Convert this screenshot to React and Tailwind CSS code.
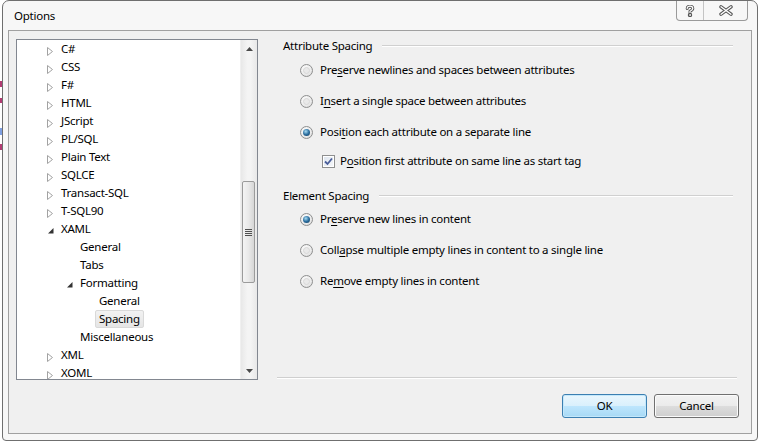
import React from "react";

const treeItems = [
  { t: "C#", l: 0, a: "closed" },
  { t: "CSS", l: 0, a: "closed" },
  { t: "F#", l: 0, a: "closed" },
  { t: "HTML", l: 0, a: "closed" },
  { t: "JScript", l: 0, a: "closed" },
  { t: "PL/SQL", l: 0, a: "closed" },
  { t: "Plain Text", l: 0, a: "closed" },
  { t: "SQLCE", l: 0, a: "closed" },
  { t: "Transact-SQL", l: 0, a: "closed" },
  { t: "T-SQL90", l: 0, a: "closed" },
  { t: "XAML", l: 0, a: "open" },
  { t: "General", l: 1 },
  { t: "Tabs", l: 1 },
  { t: "Formatting", l: 1, a: "open" },
  { t: "General", l: 2 },
  { t: "Spacing", l: 2, sel: true },
  { t: "Miscellaneous", l: 1 },
  { t: "XML", l: 0, a: "closed" },
  { t: "XOML", l: 0, a: "closed" },
];

const levelPad = ["pl-[26px]", "pl-[45px]", "pl-[64px]"];

function ClosedArrow() {
  return (
    <svg width="6" height="9" viewBox="0 0 6 9" className="mt-[4px] ml-[4px]">
      <polygon points="0.5,0.5 5.5,4.5 0.5,8.5" fill="#ffffff" stroke="#a2a2a2" strokeWidth="1" />
    </svg>
  );
}

function OpenArrow() {
  return (
    <svg width="6" height="6" viewBox="0 0 6 6" className="mt-[4px] ml-[5px]">
      <polygon points="5.5,0 5.5,5.5 0,5.5" fill="#333333" />
    </svg>
  );
}

function TreeRow({ item }) {
  return (
    <div className={`h-[18px] flex items-center shrink-0 ${levelPad[item.l]}`}>
      <div className="w-[14px] h-[18px] flex items-center">
        {item.a === "closed" && <ClosedArrow />}
        {item.a === "open" && <OpenArrow />}
      </div>
      <span
        className={
          item.sel
            ? "h-[18px] leading-[16px] px-[3px] border border-[#d9d9d9] rounded-[2px] bg-[linear-gradient(#f2f2f2,#e5e5e5)] whitespace-nowrap"
            : "h-[18px] leading-[16px] px-[3px] border border-transparent whitespace-nowrap"
        }
      >
        {item.t}
      </span>
    </div>
  );
}

function ScrollBar() {
  return (
    <div className="w-[17px] h-full flex flex-col bg-[linear-gradient(90deg,#e8e8e8,#f4f4f4_40%,#f4f4f4_60%,#e8e8e8)] border-l border-[#f0f0f0]">
      <div className="h-[17px] flex items-center justify-center shrink-0">
        <svg width="7" height="4" viewBox="0 0 7 4">
          <polygon points="3.5,0 7,4 0,4" fill="#4a4a4a" />
        </svg>
      </div>
      <div className="h-[124px] shrink-0" />
      <div className="h-[102px] shrink-0 ml-[1px] mr-[2px] border border-[#9b9b9b] rounded-[2px] bg-[linear-gradient(90deg,#f4f4f4,#e9e9e9_50%,#d6d6d6)] flex flex-col items-center justify-center gap-[1px]">
        <div className="w-[7px] h-px bg-[#505050]" />
        <div className="w-[7px] h-px bg-[#505050]" />
        <div className="w-[7px] h-px bg-[#505050]" />
        <div className="w-[7px] h-px bg-[#505050]" />
      </div>
      <div className="flex-1" />
      <div className="h-[17px] flex items-center justify-center shrink-0">
        <svg width="7" height="4" viewBox="0 0 7 4">
          <polygon points="0,0 7,0 3.5,4" fill="#4a4a4a" />
        </svg>
      </div>
    </div>
  );
}

function Tree() {
  return (
    <div className="mt-[8px] w-[242px] h-[341px] shrink-0 border border-[#828790] bg-white flex">
      <div className="flex-1 flex flex-col overflow-hidden">
        {treeItems.map((it, i) => (
          <TreeRow key={i} item={it} />
        ))}
      </div>
      <ScrollBar />
    </div>
  );
}

function GroupHeader({ children, className }) {
  return (
    <div className={`h-[16px] flex items-center pl-[6px] ${className}`}>
      <span className="leading-[16px] whitespace-nowrap">{children}</span>
      <div className="flex-1 ml-[10px] mr-[4px] h-[2px] border-t border-[#d0d0d0] border-b border-b-white" />
    </div>
  );
}

function Radio({ checked }) {
  return (
    <div className="w-[13px] h-[13px] rounded-full border border-[#8e8f8f] bg-[radial-gradient(circle_at_40%_35%,#ffffff_0%,#ececec_55%,#d2d2d2_100%)] flex items-center justify-center shrink-0">
      {checked ? (
        <div className="w-[7px] h-[7px] rounded-full bg-[radial-gradient(circle_at_40%_35%,#a8dcf3_0%,#2c6fa0_50%,#0f3553_100%)]" />
      ) : (
        <div className="w-[7px] h-[7px] rounded-full border border-[#d8d8d8] bg-[#e9e9e9]" />
      )}
    </div>
  );
}

function CheckBox() {
  return (
    <div className="w-[13px] h-[13px] border border-[#8e8f8f] bg-white p-[1px] shrink-0">
      <div className="w-full h-full bg-[linear-gradient(135deg,#dfe6ef,#f4f6f9)] flex items-center justify-center">
        <svg width="9" height="9" viewBox="0 0 9 9">
          <path d="M1 4.5 L3.5 7 L8 1.5" fill="none" stroke="#4a5e9a" strokeWidth="1.8" />
        </svg>
      </div>
    </div>
  );
}

function Option({ checked, className, children }) {
  return (
    <div className={`h-[16px] flex items-center gap-[7px] pl-[23px] ${className}`}>
      <Radio checked={checked} />
      <span className="leading-[16px] whitespace-nowrap">{children}</span>
    </div>
  );
}

function U({ children }) {
  return <span className="underline underline-offset-[2px]">{children}</span>;
}

function Button({ primary, children }) {
  return (
    <div
      className={
        primary
          ? "w-[85px] h-[24px] rounded-[3px] border border-[#3c7fb1] bg-[linear-gradient(#eaf6fd,#d9f0fc_50%,#bee6fd_50%,#a7d9f5)] shadow-[inset_0_0_0_1px_#c4e8fb] flex items-center justify-center"
          : "w-[85px] h-[24px] rounded-[3px] border border-[#707070] bg-[linear-gradient(#f2f2f2,#ebebeb_50%,#dddddd_50%,#cfcfcf)] shadow-[inset_0_0_0_1px_#fbfbfb] flex items-center justify-center"
      }
    >
      <span className="leading-[16px]">{children}</span>
    </div>
  );
}

function RightPanel() {
  return (
    <div className="ml-[19px] flex-1 flex flex-col pt-[7px] pb-[15px]">
      <GroupHeader>Attribute Spacing</GroupHeader>
      <Option className="mt-[8px]">
        Pre<U>s</U>erve newlines and spaces between attributes
      </Option>
      <Option className="mt-[15px]">
        I<U>n</U>sert a single space between attributes
      </Option>
      <Option checked className="mt-[15px]">
        Posi<U>t</U>ion each attribute on a separate line
      </Option>
      <div className="h-[16px] flex items-center gap-[5px] pl-[45px] mt-[13px]">
        <CheckBox />
        <span className="leading-[16px] whitespace-nowrap">
          P<U>o</U>sition first attribute on same line as start tag
        </span>
      </div>
      <GroupHeader className="mt-[19px]">Element Spacing</GroupHeader>
      <Option checked className="mt-[7px]">
        Pr<U>e</U>serve new lines in content
      </Option>
      <Option className="mt-[15px]">
        Coll<U>a</U>pse multiple empty lines in content to a single line
      </Option>
      <Option className="mt-[15px]">
        Re<U>m</U>ove empty lines in content
      </Option>
      <div className="flex-1" />
      <div className="h-[2px] border-t border-[#cfcfcf] border-b border-b-white" />
      <div className="mt-[15px] flex justify-end gap-[7px] -mr-[2px]">
        <Button primary>OK</Button>
        <Button>Cancel</Button>
      </div>
    </div>
  );
}

function HelpIcon() {
  return (
    <svg width="10" height="12" viewBox="0 0 10 12">
      <g fill="none" strokeLinecap="round" strokeLinejoin="round">
        <path d="M2.2 3.6 Q2.2 1.2 5 1.2 Q7.8 1.2 7.8 3.6 Q7.8 5.2 5 6.2 L5 7.4" stroke="#555555" strokeWidth="3" />
        <circle cx="5" cy="10" r="0.9" stroke="#555555" strokeWidth="2.6" />
        <path d="M2.2 3.6 Q2.2 1.2 5 1.2 Q7.8 1.2 7.8 3.6 Q7.8 5.2 5 6.2 L5 7.4" stroke="#ffffff" strokeWidth="1.2" />
        <circle cx="5" cy="10" r="0.5" fill="#ffffff" stroke="#ffffff" strokeWidth="0.6" />
      </g>
    </svg>
  );
}

function CloseIcon() {
  return (
    <svg width="16" height="11" viewBox="0 0 16 11">
      <g fill="none" strokeLinecap="round">
        <path d="M3 1.8 L13 9.2 M13 1.8 L3 9.2" stroke="#555555" strokeWidth="3.4" />
        <path d="M3 1.8 L13 9.2 M13 1.8 L3 9.2" stroke="#ffffff" strokeWidth="1.4" />
      </g>
    </svg>
  );
}

export default function App() {
  return (
    <div className="relative w-[758px] h-[441px] bg-white overflow-hidden font-['Noto_Sans',sans-serif] text-[11.5px] tracking-[-0.25px] text-black">
      <div className="absolute left-0 top-[81px] w-[2px] h-[6px] bg-[#b23b72]" />
      <div className="absolute left-0 top-[98px] w-[2px] h-[5px] bg-[#b23b72]" />
      <div className="absolute left-0 top-[128px] w-[2px] h-[7px] bg-[#7f9fe0]" />
      <div className="absolute left-0 top-[144px] w-[2px] h-[6px] bg-[#b23b72]" />
      <div className="ml-[2px] w-[756px] h-[441px] flex flex-col border border-[#6f6f6f] rounded-t-[7px] rounded-b-[4px] bg-[#f7f7f7] px-[5px] pb-[6px]">
        <div className="h-[29px] shrink-0 flex items-start">
          <span className="mt-[7px] ml-[6px] leading-[16px]">Options</span>
          <div className="ml-auto mr-[4px] h-[20px] flex border border-t-0 border-[#9a9a9a] rounded-b-[4px] bg-[#f7f7f7]">
            <div className="w-[27px] flex items-center justify-center border-r border-[#c4c4c4]">
              <HelpIcon />
            </div>
            <div className="w-[43px] flex items-center justify-center">
              <CloseIcon />
            </div>
          </div>
        </div>
        <div className="flex-1 border border-[#a0a0a0] bg-[#f0f0f0] flex pl-[7px] pr-[14px]">
          <Tree />
          <RightPanel />
        </div>
      </div>
    </div>
  );
}
